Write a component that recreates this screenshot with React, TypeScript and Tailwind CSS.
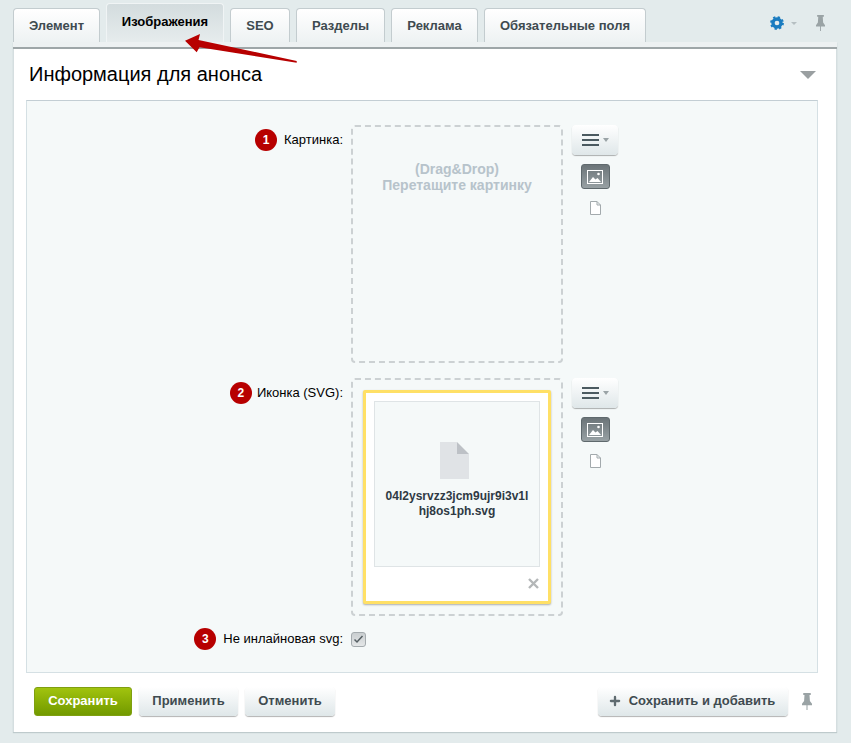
import { Plus } from "lucide-react";

const tabs = [
  { label: "Элемент", width: "w-[87px]" },
  { label: "Изображения", width: "w-[118px]", active: true },
  { label: "SEO", width: "w-[60px]" },
  { label: "Разделы", width: "w-[89px]" },
  { label: "Реклама", width: "w-[87px]" },
  { label: "Обязательные поля", width: "w-[162px]" },
];

function Pin({ className }: { className?: string }) {
  return (
    <svg viewBox="0 0 12 18" preserveAspectRatio="none" className={className}>
      <path d="M1.500 0h9v2H9l.5 6.500 2.500 3V13H6.600v5H5.400v-5H0v-1.500l2.500-3L3 2H1.500z" fill="currentColor" />
    </svg>
  );
}

function Badge({ n }: { n: number }) {
  return (
    <span className="flex h-[22px] w-[22px] shrink-0 items-center justify-center rounded-full bg-[#b70000] text-[12px] font-bold text-white">
      {n}
    </span>
  );
}

function FieldLabel({ n, text, gap }: { n: number; text: string; gap: string }) {
  return (
    <div className={`flex items-center justify-end ${gap} text-[13px] text-black`}>
      <Badge n={n} />
      <span>{text}</span>
    </div>
  );
}

function Tools() {
  return (
    <div className="flex w-[47px] flex-col items-center pl-[1px]">
      <div className="flex h-[30px] w-[46px] items-center justify-center gap-[4px] rounded-[4px] bg-gradient-to-b from-[#ffffff] to-[#dfe7e9] shadow-[0_1px_1px_rgba(0,0,0,0.3)]">
        <span className="flex w-[17px] flex-col gap-[3px]">
          <span className="h-[2px] bg-[#4b5a60]" />
          <span className="h-[2px] bg-[#4b5a60]" />
          <span className="h-[2px] bg-[#4b5a60]" />
        </span>
        <span className="h-0 w-0 border-x-[3.5px] border-t-[4px] border-x-transparent border-t-[#9aa3a6]" />
      </div>
      <div className="mt-[9px] flex h-[25px] w-[29px] items-center justify-center rounded-[3px] border border-[#5f696d] bg-gradient-to-b from-[#6b7478] to-[#98a1a4]">
        <svg viewBox="0 0 16 14" className="h-[14px] w-[16px]">
          <rect x="0.500" y="0.500" width="15" height="13" fill="none" stroke="#fff" />
          <path d="M2 12l4-5 2.500 2.500L10.500 8 14 12z" fill="#fff" />
          <circle cx="11.500" cy="4" r="1.300" fill="#fff" />
        </svg>
      </div>
      <svg viewBox="0 0 11 14" className="mt-[12px] h-[14px] w-[11px]">
        <path d="M.5.500h6.500l3.500 3.500v9.500h-10z M7 .5v3.500h3.500" fill="#fff" stroke="#a3aaad" />
      </svg>
    </div>
  );
}

export default function App() {
  return (
    <div className="relative h-[743px] w-[851px] overflow-hidden bg-[#e3ebec] font-['Liberation_Sans',Arial,sans-serif]">
      {/* tabs */}
      <div className="flex h-[42px] items-end pl-[13px] pr-[14px]">
        <div className="flex items-end gap-[6px]">
          {tabs.map((tab) => (
            <div
              key={tab.label}
              className={
                tab.active
                  ? `${tab.width} flex h-[39px] items-center justify-center rounded-t-[4px] border border-b-0 border-[#f0f4f5] bg-gradient-to-b from-[#d3dcde] to-[#e6eced] pb-[3px] text-[13px] font-bold text-black`
                  : `${tab.width} flex h-[34px] items-center justify-center rounded-t-[4px] border border-b-0 border-[#c3cccf] bg-gradient-to-b from-[#ffffff] to-[#eef2f3] text-[13px] font-bold text-[#3f4b50]`
              }
            >
              {tab.label}
            </div>
          ))}
        </div>
        <div className="ml-auto flex items-center pb-[11px] pr-[12px]">
          <svg viewBox="0 0 16 16" className="h-[14px] w-[14px]">
            <circle cx="8" cy="8" r="4.600" fill="none" stroke="#1a7cc0" strokeWidth="3.800" />
            <circle cx="8" cy="8" r="6.800" fill="none" stroke="#1a7cc0" strokeWidth="2.200" strokeDasharray="2.600 2.740" />
          </svg>
          <span className="ml-[7px] h-0 w-0 border-x-[3px] border-t-[3px] border-x-transparent border-t-[#b6bfc2]" />
          <Pin className="ml-[19px] h-[16px] w-[9px] text-[#9aa3a5]" />
        </div>
      </div>

      {/* panel */}
      <div className="ml-[13px] w-[824px] shadow-[0_1px_1px_rgba(120,140,145,0.35)]">
        <div className="h-[7px] border-b-2 border-[#9ea6a8] bg-[#edf1f2]" />
        <div className="border-x border-[#d5dee0] bg-white pb-[16px] pl-[12px] pr-[18px]">
          <div className="flex h-[51px] items-center justify-between pl-[3px] pr-[2px]">
            <h2 className="pb-[2px] text-[20px] text-black">Информация для анонса</h2>
            <span className="mt-[1px] h-0 w-0 border-x-[8px] border-t-[8px] border-x-transparent border-t-[#9a9fa1]" />
          </div>

          <div className="h-[573px] border border-[#d5e0e4] border-t-[#c3ced4] bg-[#f5f9f9] pt-[24px]">
            <div className="grid grid-cols-[316px_212px_47px] gap-x-[8px] gap-y-[15px]">
              <div className="pt-[4px]">
                <FieldLabel n={1} text="Картинка:" gap="gap-[7px]" />
              </div>
              <div className="flex h-[238px] flex-col items-center rounded-[4px] border-2 border-dashed border-[#ccd1d3] pt-[34px] text-[14px] font-bold leading-[16px] text-[#b7c3cb]">
                <span>(Drag&amp;Drop)</span>
                <span>Перетащите картинку</span>
              </div>
              <Tools />

              <div className="pt-[4px]">
                <FieldLabel n={2} text="Иконка (SVG):" gap="gap-[5px]" />
              </div>
              <div className="h-[238px] rounded-[4px] border-2 border-dashed border-[#ccd1d3] p-[10px]">
                <div className="h-[214px] w-[188px] rounded-[2px] border-[3px] border-[#ffe066] bg-white p-[8px] shadow-[0_1px_2px_rgba(0,0,0,0.3)]">
                  <div className="flex h-[166px] w-[166px] flex-col items-center border border-[#dfe4e6] bg-[#f5f9f9] pt-[40px]">
                    <svg viewBox="0 0 29 37" className="mr-[6px] h-[37px] w-[29px]">
                      <path d="M0 0h17v12h12v25H0z" fill="#e0e3e6" />
                      <path d="M17 0l12 12H17z" fill="#bdc1c6" />
                    </svg>
                    <div className="mt-[10px] w-[150px] break-all text-center text-[12px] font-bold leading-[15px] text-[#2f3a44]">
                      04l2ysrvzz3jcm9ujr9i3v1lhj8os1ph.svg
                    </div>
                  </div>
                  <div className="flex justify-end pr-[1px] pt-[11px]">
                    <svg viewBox="0 0 11 11" className="h-[11px] w-[11px]">
                      <path d="M1 1l9 9M10 1l-9 9" stroke="#b4b7b8" strokeWidth="2.400" />
                    </svg>
                  </div>
                </div>
              </div>
              <Tools />

              <div className="-mt-[3px]">
                <FieldLabel n={3} text="Не инлайновая svg:" gap="gap-[7px]" />
              </div>
              <div className="-mt-[3px] flex items-center">
                <span className="flex h-[15px] w-[15px] items-center justify-center rounded-[3px] border border-[#a4abae] bg-gradient-to-b from-[#c9ced0] to-[#e4e7e8]">
                  <svg viewBox="0 0 11 9" className="h-[9px] w-[11px]">
                    <path d="M1.500 4.500l2.500 2.500 5.500-6" fill="none" stroke="#555f63" strokeWidth="1.500" />
                  </svg>
                </span>
              </div>
            </div>
          </div>

          {/* footer buttons */}
          <div className="flex items-center pl-[8px] pr-[6px] pt-[14px]">
            <button className="h-[29px] w-[98px] rounded-[3px] border border-[#7f9f10] bg-gradient-to-b from-[#a1c30e] to-[#729a00] pb-[1px] text-[13px] font-bold text-white">
              Сохранить
            </button>
            <button className="ml-[7px] h-[29px] w-[99px] rounded-[4px] bg-gradient-to-b from-[#ffffff] to-[#dfe7e9] pb-[1px] text-[13px] font-bold text-[#3f4b50] shadow-[0_1px_1px_rgba(0,0,0,0.3)]">
              Применить
            </button>
            <button className="ml-[7px] h-[29px] w-[90px] rounded-[4px] bg-gradient-to-b from-[#ffffff] to-[#dfe7e9] pb-[1px] text-[13px] font-bold text-[#3f4b50] shadow-[0_1px_1px_rgba(0,0,0,0.3)]">
              Отменить
            </button>
            <button className="ml-auto flex h-[29px] w-[190px] items-center justify-center gap-[7px] rounded-[4px] bg-gradient-to-b from-[#ffffff] to-[#dfe7e9] pb-[1px] pr-[3px] text-[13px] font-bold text-[#3f4b50] shadow-[0_1px_1px_rgba(0,0,0,0.3)]">
              <Plus className="h-[14px] w-[14px] text-[#5f6b70]" strokeWidth={4} absoluteStrokeWidth />
              Сохранить и добавить
            </button>
            <Pin className="ml-[14px] h-[17px] w-[10px] text-[#9aa3a5]" />
          </div>
        </div>
      </div>

      {/* red arrow annotation */}
      <svg className="pointer-events-none absolute left-0 top-0" width="851" height="743">
        <path d="M185 40.700L200 34l-1.500 6 98.200 21v1.700l-97.200-15.400-2.800 5z" fill="#b70000" />
      </svg>
    </div>
  );
}
